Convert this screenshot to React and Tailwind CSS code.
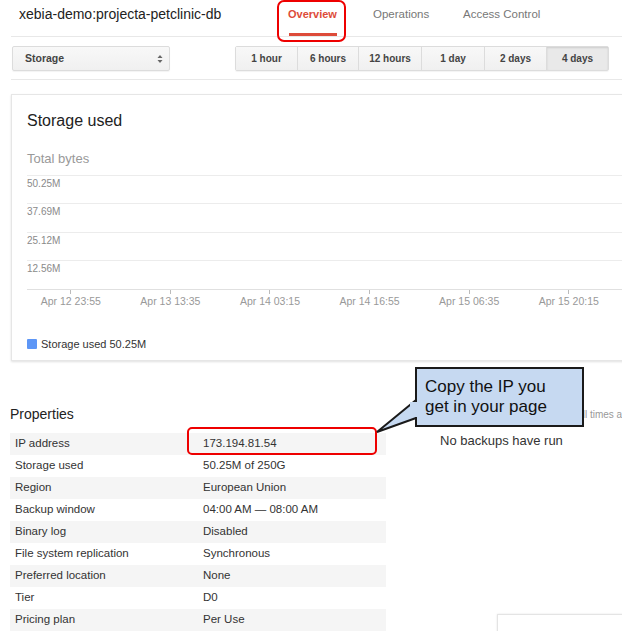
const RANGES = ['1 hour', '6 hours', '12 hours', '1 day', '2 days', '4 days'];
const RANGE_W = ['w-[61px]', 'w-[61px]', 'w-[63px]', 'w-[63px]', 'w-[62px]', 'w-[62px]'];
const Y_LABELS = ['50.25M', '37.69M', '25.12M', '12.56M'];
const X_LABELS = ['Apr 12 23:55', 'Apr 13 13:35', 'Apr 14 03:15', 'Apr 14 16:55', 'Apr 15 06:35', 'Apr 15 20:15'];

const PROPS = [
  ['IP address', '173.194.81.54'],
  ['Storage used', '50.25M of 250G'],
  ['Region', 'European Union'],
  ['Backup window', '04:00 AM — 08:00 AM'],
  ['Binary log', 'Disabled'],
  ['File system replication', 'Synchronous'],
  ['Preferred location', 'None'],
  ['Tier', 'D0'],
  ['Pricing plan', 'Per Use'],
];

function Header() {
  return (
    <div className="ml-[11px] h-[37px] flex border-b border-[#e8e8e8]">
      <div className="w-[266px] pl-[8px] pt-[5px] text-[14px] leading-[18px] text-[#222]">
        xebia-demo:projecta-petclinic-db
      </div>
      <div className="relative w-[96px] pl-[11px]">
        <div className="pt-[7px] text-[11px] leading-[14px] font-bold text-[#dd4b39]">Overview</div>
        <div className="absolute left-[12px] top-[33px] w-[48px] h-[3px] bg-[#dd4b39]" />
        {/* annotation outline */}
        <div className="absolute left-0 top-0 w-[69px] h-[42px] rounded-[7px] border-2 border-[#ee0000]" />
      </div>
      <div className="w-[90px] pt-[7px] text-[11.5px] leading-[14px] text-[#777]">Operations</div>
      <div className="pt-[7px] text-[11.5px] leading-[14px] text-[#777]">Access Control</div>
    </div>
  );
}

function Toolbar() {
  return (
    <div className="ml-[11px] pt-[9px] pb-[8px] flex border-b border-[#e8e8e8]">
      <div className="ml-[1px] w-[158px] h-[25px] flex items-center justify-between pl-[12px] pr-[6px] rounded-[2px] border border-[#dcdcdc] bg-gradient-to-b from-[#f8f8f8] to-[#f0f0f0] shadow-[0_1px_1px_rgba(0,0,0,0.05)]">
        <span className="text-[10.5px] font-bold text-[#444]">Storage</span>
        <svg width="6" height="10" viewBox="0 0 6 10">
          <path d="M3 1 L5.5 4 L0.5 4 Z" fill="#666" />
          <path d="M3 9 L5.5 6 L0.5 6 Z" fill="#666" />
        </svg>
      </div>
      <div className="ml-[65px] h-[25px] flex rounded-[2px] border border-[#dcdcdc] shadow-[0_1px_1px_rgba(0,0,0,0.05)]">
        {RANGES.map((r, i) => (
          <div
            key={r}
            className={`${RANGE_W[i]} flex items-center justify-center text-[10px] font-bold text-[#444] ${i > 0 ? 'border-l border-[#dcdcdc]' : ''} ${
              i === 5
                ? 'bg-[#e9e9e9] shadow-[inset_0_1px_2px_rgba(0,0,0,0.12)]'
                : 'bg-gradient-to-b from-[#f8f8f8] to-[#f0f0f0]'
            }`}
          >
            {r}
          </div>
        ))}
      </div>
    </div>
  );
}

function ChartCard() {
  return (
    <div className="ml-[11px] mt-[14px] w-[640px] h-[267px] border border-[#e6e6e6] bg-white shadow-[0_1px_2px_rgba(0,0,0,0.12)] pl-[15px]">
      <div className="pt-[16px] text-[16px] leading-[20px] text-[#222]">Storage used</div>
      <div className="mt-[20px] text-[13px] leading-[16px] text-[#999]">Total bytes</div>
      <div className="mt-[8px]">
        {Y_LABELS.map((l, i) => (
          <div key={l} className={`${i % 2 ? 'h-[29px]' : 'h-[28px]'} border-t border-[#ececec] pt-[2px] text-[10px] leading-[12px] text-[#8a8a8a]`}>
            {l}
          </div>
        ))}
        <div className="border-t border-[#e0e0e0]">
          <div className="-ml-[6px] flex">
            {X_LABELS.map(l => (
              <div key={l} className="w-[99.6px] flex flex-col items-center">
                <div className="w-px h-[4px] bg-[#bbb]" />
                <div className="mt-[1px] text-[10.5px] leading-[12px] text-[#999] whitespace-nowrap">{l}</div>
              </div>
            ))}
          </div>
        </div>
      </div>
      <div className="mt-[30px] flex items-center gap-[4px]">
        <span className="w-[10px] h-[10px] rounded-[1px] bg-[#5d96f6]" />
        <span className="text-[11px] leading-[14px] text-[#333]">Storage used 50.25M</span>
      </div>
    </div>
  );
}

function Properties() {
  return (
    <div className="ml-[10px] w-[376px] shrink-0">
      <div className="text-[14px] leading-[18px] text-[#222]">Properties</div>
      <div className="relative mt-[10px]">
        {PROPS.map(([k, v], i) => (
          <div key={k} className={`h-[22px] flex items-center text-[11.5px] text-[#333] ${i % 2 === 0 ? 'bg-[#f5f5f5]' : ''}`}>
            <span className="w-[193px] pl-[5px]">{k}</span>
            <span>{v}</span>
          </div>
        ))}
        {/* annotation outline round the IP */}
        <div className="absolute left-[177px] top-[-6px] w-[190px] h-[28px] rounded-[5px] border-2 border-[#ee0000]" />
      </div>
    </div>
  );
}

function Callout() {
  return (
    <div className="absolute left-[370px] top-[362px] w-[220px] h-[80px]">
      <svg className="absolute left-0 top-0" width="220" height="80" viewBox="0 0 220 80">
        <path d="M46 38 L7 70 L46 56" fill="#c6d9f1" stroke="#1a1a1a" strokeWidth="2" strokeLinejoin="miter" />
      </svg>
      <div className="absolute left-[45px] top-[5px] w-[169px] h-[60px] bg-[#c6d9f1] border-2 border-[#1a1a1a] pl-[8px] pt-[8px] text-[17px] leading-[20px] text-[#111]">
        Copy the IP you
        <br />
        get in your page
      </div>
      <div className="absolute left-[40px] top-[40px] w-[8px] h-[15px] bg-[#c6d9f1]" />
    </div>
  );
}

export default function App() {
  return (
    <div className="relative w-[622px] h-[631px] overflow-hidden bg-white font-['Liberation_Sans',Arial,sans-serif]">
      <Header />
      <Toolbar />
      <ChartCard />
      <div className="mt-[44px] flex">
        <Properties />
        <div className="flex-1 relative">
          <div className="pl-[190px] pt-[3px] text-[10px] leading-[14px] text-[#999] whitespace-nowrap">All times are UTC</div>
          <div className="pl-[54px] pt-[11px] text-[13px] leading-[16px] text-[#333]">No backups have run</div>
          <div className="ml-[111px] mt-[165px] h-[30px] border border-[#e4e4e4] shadow-[0_0_2px_rgba(0,0,0,0.1)]" />
        </div>
      </div>
      <Callout />
    </div>
  );
}
